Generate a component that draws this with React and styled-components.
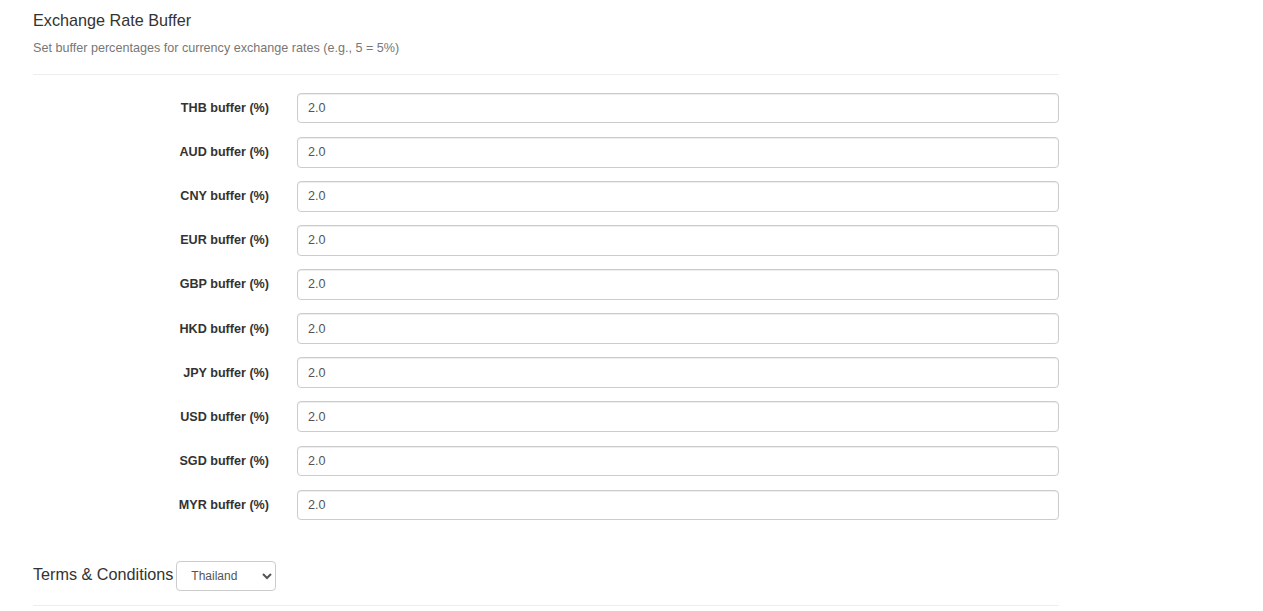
import styled, {createGlobalStyle} from 'styled-components';

const GlobalStyle = createGlobalStyle`
    body {
        margin: 0;
        background: #fff;
        color: #333;
        font-family: "Liberation Sans", Arial, Helvetica, sans-serif;
    }
`

const Page = styled.div`
    width: 1026px;
    padding: 12px 0 0 33px;
`

const Title = styled.h4`
    margin: 0;
    font-size: 16.2px;
    font-weight: normal;
    line-height: 1.1;
    color: #333;
`

const Subtitle = styled.p`
    margin: 10px 0 0;
    font-size: 12.6px;
    line-height: 17px;
    color: #777;
`

const Divider = styled.hr`
    margin: ${props => props.top || 17}px 0 ${props => props.bottom || 18}px;
    border: 0;
    border-top: 1px solid #eee;
    height: 0;
`

const FormRow = styled.div`
    display: grid;
    grid-template-columns: 236px 1fr;
    column-gap: 28px;
    align-items: center;
    margin-bottom: 13.5px;
`

const Label = styled.label`
    text-align: right;
    font-size: 12.6px;
    font-weight: bold;
    color: #333;
`

const Input = styled.input`
    box-sizing: border-box;
    width: 100%;
    height: 30.6px;
    padding: 5px 10px;
    border: 1px solid #ccc;
    border-radius: 4px;
    box-shadow: inset 0 1px 1px rgba(0, 0, 0, 0.075);
    font-family: inherit;
    font-size: 12.6px;
    color: #555;
    background: #fff;
    outline: none;
`

const SectionHeading = styled.h4`
    display: flex;
    align-items: baseline;
    gap: 3px;
    margin: 40.5px 0 0;
    font-size: 16.2px;
    font-weight: normal;
    line-height: 1.1;
    color: #333;
`

const Select = styled.select`
    box-sizing: border-box;
    width: 100px;
    height: 30px;
    padding: 5px 10px;
    border: 1px solid #ccc;
    border-radius: 4px;
    font-family: inherit;
    font-size: 12px;
    color: #555;
    background: #fff;
`

const currencies = ['THB', 'AUD', 'CNY', 'EUR', 'GBP', 'HKD', 'JPY', 'USD', 'SGD', 'MYR'];

export default function App() {
    return (
        <Page>
            <GlobalStyle/>
            <Title>Exchange Rate Buffer</Title>
            <Subtitle>Set buffer percentages for currency exchange rates (e.g., 5 = 5%)</Subtitle>
            <Divider/>
            {currencies.map(code => (
                <FormRow key={code}>
                    <Label htmlFor={`buffer-${code}`}>{code} buffer (%)</Label>
                    <Input id={`buffer-${code}`} type="text" defaultValue="2.0"/>
                </FormRow>
            ))}
            <SectionHeading>
                Terms &amp; Conditions
                <Select defaultValue="th">
                    <option value="th">Thailand</option>
                    <option value="au">Australia</option>
                    <option value="sg">Singapore</option>
                </Select>
            </SectionHeading>
            <Divider top={14}/>
        </Page>
    )
};
